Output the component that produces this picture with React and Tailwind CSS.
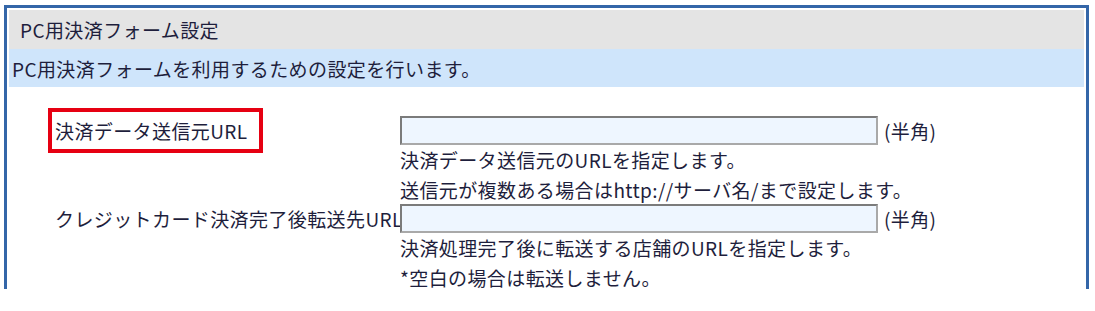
export default function App() {
  const font = "font-['Meiryo','Noto_Sans_CJK_JP','Noto_Sans',sans-serif]"

  return (
    <div className={`w-[1095px] h-[311px] overflow-hidden bg-white text-[19px] tracking-[0.4px] text-[#1e1e3c] ${font}`}>
      <div className="ml-[4px] mt-[5px] w-[1085px] h-[284px] border-[3px] border-b-0 border-[#3466a8] px-[2px] pt-[2px]">
        {/* Title bar */}
        <div className="h-[39px] bg-[#e4e4e4] pl-[11px] flex items-center leading-none">
          PC用決済フォーム設定
        </div>
        {/* Description bar */}
        <div className="h-[38px] bg-[#cfe5fb] pl-[3px] flex items-center leading-none">
          PC用決済フォームを利用するための設定を行います。
        </div>

        <div className="pt-[29px] pl-[46px] grid grid-cols-[345px_1fr]">
          {/* Row 1 */}
          <div className="h-[29px] flex items-center">
            <span className="relative whitespace-nowrap leading-none">
              決済データ送信元URL
              <span className="absolute left-[-7px] top-[-13px] w-[215px] h-[45px] border-4 border-[#e60012]" />
            </span>
          </div>
          <div>
            <div className="flex items-center">
              <input
                type="text"
                className="w-[478px] h-[29px] bg-[#eef6ff] border-2 border-[#7b7b7b] border-b-[#a9a9a9] border-r-[#a9a9a9] outline-none"
              />
              <span className="ml-[6px] leading-none">(半角)</span>
            </div>
            <div className="leading-[29.5px] whitespace-nowrap">
              <div>決済データ送信元のURLを指定します。</div>
              <div>送信元が複数ある場合はhttp://サーバ名/まで設定します。</div>
            </div>
          </div>

          {/* Row 2 */}
          <div className="h-[29px] flex items-center">
            <span className="whitespace-nowrap leading-none">クレジットカード決済完了後転送先URL</span>
          </div>
          <div>
            <div className="flex items-center">
              <input
                type="text"
                className="w-[478px] h-[29px] bg-[#eef6ff] border-2 border-[#7b7b7b] border-b-[#a9a9a9] border-r-[#a9a9a9] outline-none"
              />
              <span className="ml-[6px] leading-none">(半角)</span>
            </div>
            <div className="leading-[29.5px] whitespace-nowrap">
              <div>決済処理完了後に転送する店舗のURLを指定します。</div>
              <div>*空白の場合は転送しません。</div>
            </div>
          </div>
        </div>
      </div>
    </div>
  )
}
